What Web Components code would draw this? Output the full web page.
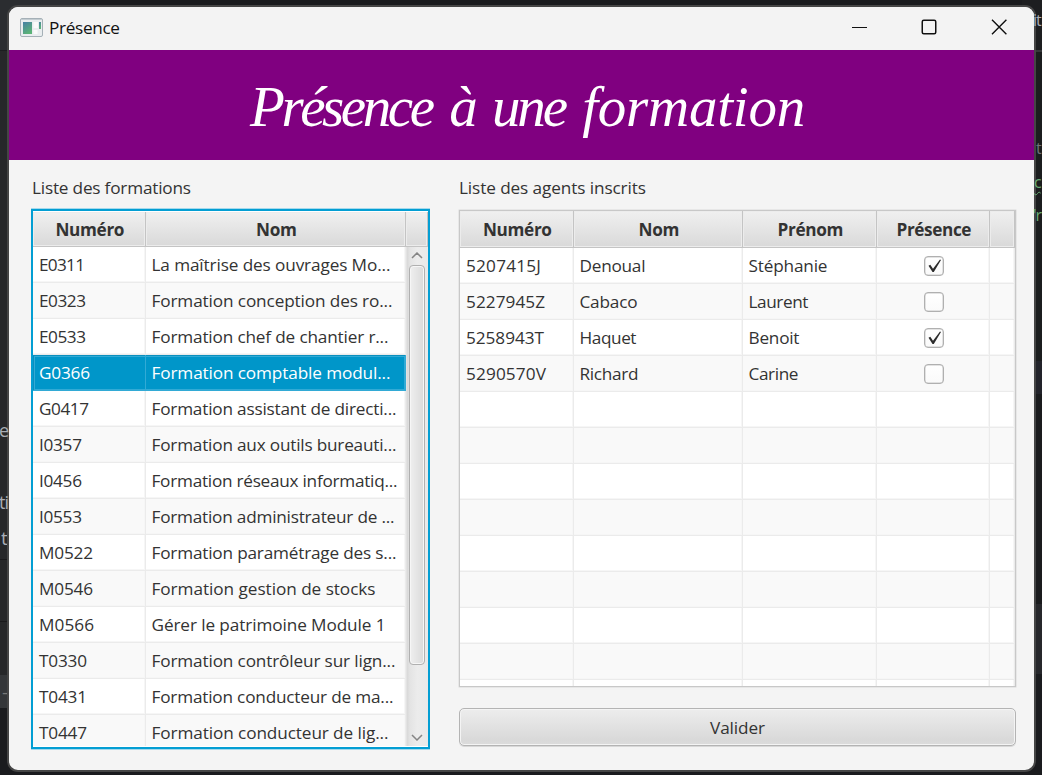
<!DOCTYPE html>
<html lang="fr">
<head>
<meta charset="utf-8">
<title>Présence</title>
<style>
html,body{margin:0;height:100%;overflow:hidden;background:#1a1b1e}
body{font:17.2px/24px "Open Sans","Noto Sans",sans-serif;color:#333}
</style>
</head>
<body>
<desk-top>
  <app-window>
    <title-bar></title-bar>
    <page-banner></page-banner>
    <presence-form></presence-form>
  </app-window>
</desk-top>
<script>
const define=(name,html,setup)=>customElements.define(name,class extends HTMLElement{
  connectedCallback(){
    if(this.shadowRoot)return;
    const t=document.createElement('template');
    t.innerHTML=html;
    this.attachShadow({mode:'open'}).append(t.content.cloneNode(true));
    if(setup)setup.call(this,this.shadowRoot);
  }
});

/* Text set to a given advance width by tracking. */
define('fit-text',`<style>:host{display:inline-block;white-space:pre}span{display:inline-block}</style><span><slot></slot></span>`,function(root){
  const w=+this.getAttribute('w'),s=root.querySelector('span');
  if(!w)return;
  s.style.letterSpacing='0';
  const n=this.textContent.length,ls=(w-s.getBoundingClientRect().width)/Math.max(1,n-1);
  s.style.letterSpacing=ls+'px';s.style.marginRight=-ls+'px';
});

define('desk-top',`<style>
:host{display:block;position:relative;width:1042px;height:775px;overflow:hidden;background:#1a1b1e}
.edge{position:absolute;top:0;height:775px;display:flex;flex-direction:column}
.l{left:0;width:80px}.r{right:0;width:20px}
.edge i{display:block;flex:none}
b{position:absolute;font:19px/24px "Open Sans",sans-serif;color:#a9adb5}
b.o{z-index:1;font-size:16px;letter-spacing:-1px}
slot{display:block;position:absolute;left:7px;top:5px}
</style>
<div class="edge l"><i style="height:50px;background:#2b2d30"></i><i style="height:1px;background:#1c1d20"></i><i style="height:508px;background:#262729"></i><i style="height:1px;background:#19191b"></i><i style="height:61px;background:#262729"></i><i style="height:1px;background:#19191b"></i><i style="height:53px;background:#262729"></i><i style="height:33px;background:#343639"></i></div>
<div class="edge r"><i style="height:50px;background:#1d1e20"></i><i style="height:2px;background:#36373a"></i><i style="height:309px;background:#1b1d1e"></i><i style="height:33px;background:#22232a"></i><i style="height:210px;background:#1a1b1d"></i><i style="height:70px;background:#26272b"></i></div>
<b style="left:-1px;top:418px;z-index:1;font-size:18px">e</b><b style="left:-1px;top:490px;z-index:1;font-size:18px;letter-spacing:-1px">ti</b><b style="left:1px;top:526px">t</b><b style="left:2px;top:680px;color:#777">–</b>
<b class="o" style="left:1033px;top:8px">it</b><b class="o" style="left:1036px;top:136px;color:#6f737a">t</b><b class="o" style="left:1034px;top:170px;color:#6aab73;text-decoration:underline wavy 1px;text-underline-offset:3px">c</b><b class="o" style="left:1033px;top:203px;color:#6aab73">'r</b>
<slot></slot>`);

define('app-window',`<style>
:host{display:flex;flex-direction:column;box-sizing:border-box;width:1029px;height:767px;border:2px solid #454545;border-radius:11px;overflow:hidden;background:#f4f4f4}
</style><slot></slot>`);

define('title-bar',`<style>
:host{display:flex;align-items:center;height:43px;background:#f3f3f3;color:#111;padding-left:11px;box-sizing:border-box;flex:none}
.ico{margin:-3px 6px 0 0}
fit-text{margin-top:-2px;flex:1}
.ctl{display:flex;gap:54px;margin:-3px 27px 0 0}
svg{display:block;flex:none}
</style>
<svg class="ico" width="23" height="19" viewBox="0 0 23 19"><defs><linearGradient id="g" x1="0" y1="0" x2=".5" y2="1"><stop stop-color="#477fa5"/><stop offset="1" stop-color="#5bb377"/></linearGradient></defs><rect x=".5" y=".5" width="22" height="18" rx="1.5" fill="#e9edef" stroke="#a5b0b7"/><path d="M1 1.500h21" stroke="#c3ccd1"/><rect x="3" y="4" width="9" height="12" fill="url(#g)"/><path d="M13.500 4h4.500v6h-4.500zM13.500 12h4v4h-4z" fill="#fafafa"/><rect x="19" y="4" width="2" height="7" fill="url(#g)"/></svg>
<fit-text w="71">Présence</fit-text>
<div class="ctl">
<svg width="15" height="16"><path d="M0 8.500h15" stroke="#111"/></svg>
<svg width="16" height="16"><rect x="1.250" y="1.250" width="13.500" height="13.500" rx="1.500" fill="none" stroke="#111" stroke-width="1.500"/></svg>
<svg width="16" height="16"><path d="M1 .8l14.400 14.400M15.400.8L1 15.200" stroke="#111" stroke-width="1.400"/></svg>
</div>`);

define('page-banner',`<style>
:host{display:flex;align-items:center;height:110px;background:#800080;color:#fff;font:italic 57px/70px "Liberation Serif",serif;flex:none;box-sizing:border-box;padding:4px 0 0 241px}
fit-text{flex:none}
</style><fit-text w="185">Présence</fit-text><fit-text w="14"> </fit-text><fit-text w="28">à</fit-text><fit-text w="14"> </fit-text><fit-text w="76">une</fit-text><fit-text w="14"> </fit-text><fit-text w="223">formation</fit-text>`);

define('presence-form',`<style>
:host{display:grid;grid-template-columns:399px 557px;column-gap:29px;padding:0 18px 0 22px;height:610px;flex:none}
section{display:flex;flex-direction:column}
h2{margin:16px 0 0 1px;font:inherit;height:24px}
.a{margin-top:8px}.b{margin:10px 0 21px}
h2.r{margin-left:0}
</style>
<section><h2><fit-text w="159">Liste des formations</fit-text></h2><formation-table class="a"></formation-table></section>
<section><h2 class="r"><fit-text w="187">Liste des agents inscrits</fit-text></h2><agent-table class="b"></agent-table><push-button><fit-text w="55">Valider</fit-text></push-button></section>`);

define('push-button',`<style>
:host{display:flex;box-sizing:border-box;height:38px;padding-top:2px;border:1px solid #b4b4b4;border-radius:5px;align-items:center;justify-content:center;background:linear-gradient(#ededed,#d9d9d9 85%,#dcdcdc);box-shadow:inset 0 0 0 1px #f4f4f4,0 1px #d8d8d8}
</style><slot></slot>`);

define('column-head',`<style>
:host{display:flex;box-sizing:border-box;align-items:center;justify-content:center;padding:2px 0 0 2px;font-weight:700;border-right:1px solid #c4c4c4;border-bottom:1px solid #c4c4c4;background:linear-gradient(#f0f0f0,#d9d9d9);box-shadow:inset 0 0 0 1px #ececec}
</style><slot></slot>`);

define('data-cell',`<style>
:host{display:flex;box-sizing:border-box;align-items:center;padding:0 0 0 6px;border-right:1px solid #ebebeb;border-bottom:1px solid #ebebeb;box-shadow:inset -1px -1px var(--soft,#f6f6f6);overflow:hidden}
:host([pull]){padding-left:5.500px}
:host([center]){padding:1px 0 0 2px;justify-content:center}
</style><slot></slot>`);

define('check-box',`<style>
:host{display:block;width:20px;height:20px}
svg{display:none}:host([checked]) svg{display:block}
div{box-sizing:border-box;width:20px;height:20px;border:1px solid #b0b0b0;border-radius:4px;background:linear-gradient(#fff,#fafafa);box-shadow:inset 0 0 0 .5px #c8c8c8}
</style><div><svg width="18" height="18"><path d="M3.500 8.800l1.800-1 2.700 4L15 2.500l1 .5L8.800 15H7.500z" fill="#2c2c2c"/></svg></div>`);

const row=cells=>`<div class="row${cells.sel?' sel':''}">${cells.join('')}</div>`;
const cell=(t,w,pull)=>`<data-cell${pull?' pull':''}>${t?`<fit-text w="${w}">${t}</fit-text>`:''}</data-cell>`;

const formations=[
['E0311',46,'La maîtrise des ouvrages Mo...',239],
['E0323',47,'Formation conception des ro...',241],
['E0533',47,'Formation chef de chantier r...',237],
['G0366',51,'Formation comptable modul...',239],
['G0417',50,'Formation assistant de directi...',245],
['I0357',43,'Formation aux outils bureauti...',245],
['I0456',43,'Formation réseaux informatiq...',246],
['I0553',43,'Formation administrateur de ...',243],
['M0522',54,'Formation paramétrage des s...',245],
['M0546',54,'Formation gestion de stocks',224],
['M0566',55,'Gérer le patrimoine Module 1',234],
['T0330',48,'Formation contrôleur sur lign...',244],
['T0431',48,'Formation conducteur de ma...',242],
['T0447',48,'Formation conducteur de lig...',237]];

define('scroll-bar',`<style>
:host{display:flex;flex-direction:column;align-items:center;box-sizing:border-box;background:linear-gradient(90deg,#d8d8d8,#e4e4e4 15%,#ececec 50%,#e9e9e9);border-left:1px solid #e2e2e2}
i{box-sizing:border-box;width:16px;height:400px;border:1px solid #b0b0b0;border-radius:4px;background:linear-gradient(90deg,#efefef,#dadada);box-shadow:inset 0 0 0 1px #f6f6f6;margin:6px 1px auto 0}
svg{display:block;margin:5px 1px 0 0}.d{margin:0 1px 5px 0}
</style><svg width="12" height="7"><path d="M1 6l5-5 5 5" fill="none" stroke="#858585" stroke-width="1.500"/></svg><i></i><svg class="d" width="12" height="7"><path d="M1 1l5 5 5-5" fill="none" stroke="#858585" stroke-width="1.500"/></svg>`);

define('formation-table',`<style>
:host{display:block;box-sizing:border-box;width:399px;height:540px;border:2px solid #039ed3;background:#fff;overflow:hidden;padding-top:1px;box-shadow:0 -1px #a5d9ec,0 1px #a5d9ec;margin-top:9px!important}
.head{display:grid;grid-template-columns:113px 260px 22px;height:35px;box-sizing:border-box}
.body{display:grid;grid-template-columns:373px 22px;height:499px}
.rows{overflow:hidden;height:499px}
.row{display:grid;grid-template-columns:113px 260px;height:36px}
.row:nth-child(even){background:#f9f9f9}
.row.sel{background:#0096c9;color:#fff;box-shadow:inset 0 0 0 1px #0a8fbe,inset 0 0 0 2px #32aad5}
.sel data-cell{border-color:#32aad5;--soft:transparent}
</style>
<div class="head"><column-head><fit-text w="69">Numéro</fit-text></column-head><column-head><fit-text w="41">Nom</fit-text></column-head><column-head></column-head></div>
<div class="body"><div class="rows">${formations.map((f,i)=>{const c=[cell(f[0],f[1]),cell(f[2],f[3],1)];c.sel=i===3;return row(c)}).join('')}</div><scroll-bar></scroll-bar></div>`);

const agents=[
['5207415J',75,'Denoual',66,'Stéphanie',79,1],
['5227945Z',79,'Cabaco',58,'Laurent',60,0],
['5258943T',78,'Haquet',57,'Benoit',51,1],
['5290570V',80,'Richard',59,'Carine',50,0]];
const agentRows=Array.from({length:13},(_,i)=>{
  const a=agents[i]||[];
  return row([cell(a[0],a[1]),cell(a[2],a[3],1),cell(a[4],a[5],1),
    `<data-cell center>${agents[i]?`<check-box ${a[6]?'checked':''}></check-box>`:''}</data-cell>`,
    '<data-cell></data-cell>']);
}).join('');

define('agent-table',`<style>
:host{display:block;box-sizing:border-box;height:477px;border:1px solid #c8c8c8;background:#fff;overflow:hidden;box-shadow:0 0 0 .5px #dadada}
.row,.head{display:grid;grid-template-columns:114px 169px 134px 113px 25px;height:36px}
.head{height:37px}
.row:nth-of-type(odd){background:#f9f9f9}
</style>
<header class="head"><column-head><fit-text w="69">Numéro</fit-text></column-head><column-head><fit-text w="41">Nom</fit-text></column-head><column-head><fit-text w="66">Prénom</fit-text></column-head><column-head><fit-text w="75">Présence</fit-text></column-head><column-head></column-head></header>
<style>.row:nth-of-type(odd){background:#fff}.row:nth-of-type(even){background:#f9f9f9}</style>${agentRows}`);
</script>
</body>
</html>
